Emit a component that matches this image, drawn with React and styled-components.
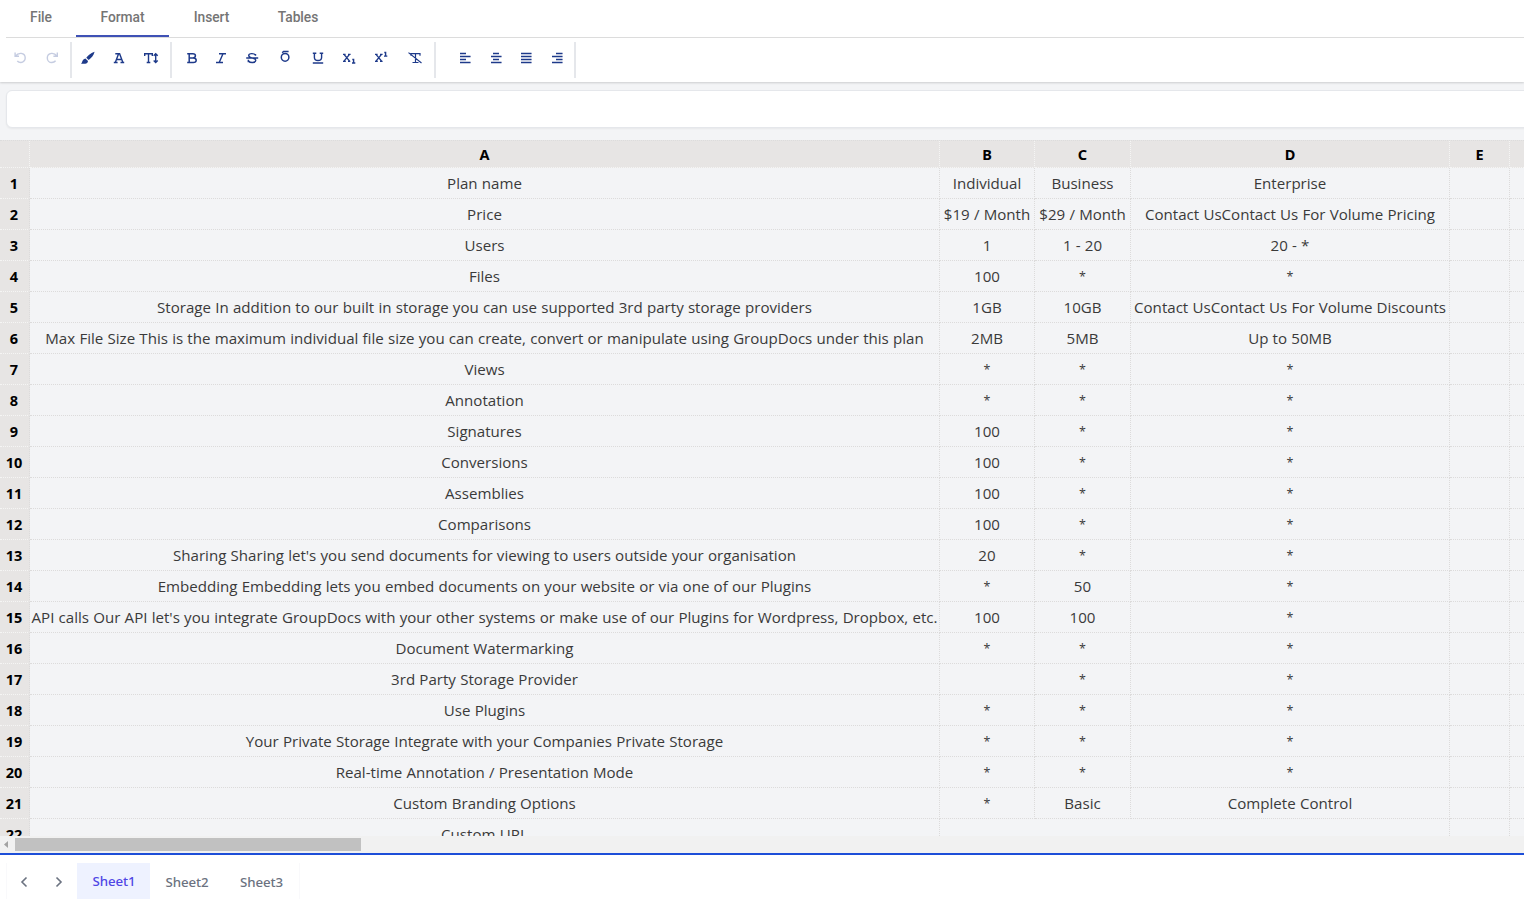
import React from "react";
import styled, { createGlobalStyle } from "styled-components";

const Global = createGlobalStyle`
  * { box-sizing: border-box; }
  html, body { margin: 0; padding: 0; overflow: hidden; background: #f3f4f6; }
`;

const Page = styled.div`
  display: flex;
  flex-direction: column;
  width: 100vw;
  height: 100vh;
  overflow: hidden;
  background: #f3f4f6;
  font-family: "Open Sans", "Noto Sans", sans-serif;
`;

const Header = styled.header`
  display: flex;
  flex-direction: column;
  flex: 0 0 82px;
  background: #fff;
  box-shadow: 0 1px 2px rgba(0, 0, 0, 0.16);
`;

const Menu = styled.nav`
  display: flex;
  height: 38px;
  margin-left: 6px;
  border-bottom: 1px solid #dcdcdc;
`;

const MenuTab = styled.div`
  width: ${(p) => p.$w}px;
  height: 37px;
  text-align: center;
  font: 500 13.8px/35px Roboto, sans-serif;
  letter-spacing: -0.05px;
  color: #757575;
  border-bottom: 2px solid ${(p) => (p.$active ? "#3f51b5" : "transparent")};
`;

const Toolbar = styled.div`
  display: flex;
  padding-top: 4px;
  height: 44px;
`;

const Group = styled.div`
  display: flex;
  width: ${(p) => p.$w}px;
  height: 36px;
  padding-left: ${(p) => p.$pad}px;
  border-right: 2px solid #e5e7eb;
`;

const ToolButton = styled.span`
  flex: 0 0 ${(p) => p.$w}px;
  height: 32px;
  color: #1e3a8a;
  opacity: ${(p) => (p.$disabled ? 0.25 : 1)};
  svg { display: block; margin: 8px auto 0; overflow: visible; }
`;

const FormulaBar = styled.div`
  flex: 0 0 38px;
  margin: 8px -6px 12px 6px;
  background: #fff;
  border: 1px solid #e5e7eb;
  border-radius: 6px;
  box-shadow: 0 1px 2px rgba(0, 0, 0, 0.05);
`;

const Grid = styled.div`
  flex: 0 0 696px;
  overflow: hidden;
`;

const Row = styled.div`
  display: grid;
  grid-template-columns: ${(p) =>
    p.$merged ? "30px 910px 510px 60px 90px" : "30px 910px 95px 96px 319px 60px 90px"};
  height: ${(p) => (p.$head ? 28 : 31)}px;
  ${(p) => p.$head && "border-top: 1px dotted #dcdcdc; background: #e7e5e4;"}
`;

const Cell = styled.div`
  overflow: hidden;
  text-align: center;
  white-space: nowrap;
  font-size: ${(p) => (p.$star ? 12.5 : 15.1)}px;
  font-weight: 400;
  line-height: ${(p) => (p.$star ? 32 : 31)}px;
  word-spacing: 0.3px;
  color: #3a3a3a;
  border-right: 1px dotted #dcdbdb;
  border-bottom: 1px dotted #dcdbdb;
`;

const HeadCell = styled(Cell)`
  font-family: "Noto Sans", sans-serif;
  font-weight: 700;
  font-size: 14.5px;
  line-height: ${(p) => (p.$row ? 31 : 27)}px;
  padding-right: ${(p) => (p.$row ? 1 : 0)}px;
  color: #000;
  background: #e7e5e4;
  border-right-color: ${(p) => (p.$row ? "#dcdbdb" : "#f5f5f4")};
  border-bottom-color: #f5f5f4;
`;

const ScrollBar = styled.div`
  display: flex;
  align-items: center;
  flex: 0 0 17px;
  padding-left: 3px;
  background: #f1f1f1;
  svg { flex: 0 0 12px; }
`;

const Thumb = styled.div`
  width: 346px;
  height: 13px;
  background: #c1c1c1;
`;

const Footer = styled.footer`
  display: flex;
  flex: 1;
  padding: 8px 0 0 6px;
  background: #fff;
  border-top: 2px solid #1d4ed8;
`;

const Pager = styled.div`
  display: flex;
  width: 71px;
  height: 36px;
  padding: 13px 0 0 13px;
  gap: 27px;
  border-left: 1px solid #f9f9fb;
`;

const SheetTab = styled.div`
  width: ${(p) => p.$w}px;
  height: 36px;
  text-align: center;
  font: 500 13.3px/38px "Noto Sans", sans-serif;
  letter-spacing: -0.1px;
  color: ${(p) => (p.$active ? "#4f46e5" : "#6b7280")};
  background: ${(p) => (p.$active ? "#eef2ff" : "transparent")};
  ${(p) => p.$active && "line-height: 36px; padding-left: 1px;"}
  ${(p) => p.$last && "border-right: 1px solid #f9f9fb;"}
`;

function Icon({ d, fill, sw = 1.4, children }) {
  return (
    <svg width="16" height="16" viewBox="0 0 16 16" fill="none" stroke="currentColor" strokeWidth={sw}>
      {d && <path d={d} />}
      {fill && <path d={fill} fill="currentColor" stroke="none" />}
      {children}
    </svg>
  );
}

const align = (lines) => (
  <Icon>
    {lines.map(([a, b], i) => (
      <g key={i}>
        <path d={`M${a} ${3.5 + i * 3}H${b}`} strokeWidth="3" opacity="0.25" />
        <path d={`M${a} ${3.5 + i * 3}H${b}`} strokeWidth="1" />
      </g>
    ))}
  </Icon>
);

const groups = [
  {
    w: 72, pad: 4,
    items: [
      [31, <Icon d="M3.1 2.6v3.7h3.9M3.4 6.2C5 4 7.2 3.2 9.2 3.4c2.3.3 4 2.2 4 4.5s-1.8 4.6-4.3 4.6c-1.6 0-2.7-.5-3.6-1.5" />, true],
      [33, <Icon d="M13.3 2.6v3.7H9.4M13 6.2C11.4 4 9.5 3.2 7.5 3.4 5.1 3.7 3.3 5.5 3.3 7.9c0 2.6 2 4.6 4.5 4.6 1.7 0 2.9-.6 3.8-1.7" />, true],
    ],
  },
  {
    w: 100, pad: 0,
    items: [
      [31, <Icon fill="M14.6 1.8c-3.3.9-6.7 3.5-8.3 6l2.4 2.2c2.7-1.9 5.1-4.9 5.9-8.2ZM5.4 8.4 8 10.9C7.9 13.1 6 14.2 1 13.7 2.4 12.8 2 9.1 5.4 8.4Z" />],
      [32, <Icon d="M4.3 3.7h4.3l3.3 8.7M7.5 4 4.3 12.4M5.3 9.5h5.4M2.8 12.5h3.8M9.5 12.5h3.7" />],
      [32, <Icon d="M1.7 6V3.7h7.6V6M5.5 3.7v8.8M3.7 12.5h3.6M12.7 4.5v7M10.7 5.7l2-2 2 2M10.7 10.6l2 2 2-2" />],
    ],
  },
  {
    w: 264, pad: 5,
    items: [
      [30, <Icon d="M3.2 3.7h5.6c3.5 0 3.5 4.2 0 4.2H5.2h4c4 0 4 4.6 0 4.6H3.2M5.2 3.7v8.8" sw={1.5} />],
      [28, <Icon d="M6 3.7h7M3 12.5h7M10 3.7l-3.8 8.8" />],
      [34, <Icon d="M11.5 5.8V4M11.5 5.3C10.5 3 4.7 3 4.7 5.6c0 1.6 2 2.1 3.7 2.5 2 .4 3.4 1 3.4 2.2 0 2.8-5.8 2.9-7.2.7M4.3 9.8v2.4M2.2 8h12" />],
      [31, <Icon d="M5.2 2.8 6.6 1.4h5" sw={1.5}><ellipse cx="8.1" cy="7.3" rx="3.8" ry="3.9" /></Icon>],
      [36, <Icon d="M2.8 3.3h3.5M9.7 3.3h3.5M4.4 3.3v4.2c0 4 7.2 4 7.2 0V3.3M2.8 13h10.4" />],
      [26, <Icon d="M2 4.4h2.6M7 4.4h2.6M3 4.4l5.8 7M8.5 4.4l-5.7 7M2 11.4h2.8M7 11.4h2.3M11.3 9.5h1.3V13M11 13h3.3" />],
      [38, <Icon d="M2 4.4h2.6M7 4.4h2.6M3 4.4l5.8 7M8.5 4.4l-5.7 7M2 11.4h2.8M7 11.4h2.6M11.3 2.5h1.3v3.6M11 6.1h3.3" />],
      [30, <Icon d="M4 5.7V3.7h9v2M8.5 3.7v8.8M5.5 12.5h6M1.5 2.6 14.5 13" sw={1.2} />],
    ],
  },
  {
    w: 140, pad: 13,
    items: [
      [32, align([[3, 9], [3, 13.5], [3, 9], [3, 13.5]])],
      [30, align([[5, 11], [3, 13.5], [5, 11], [3, 13.5]])],
      [30, align([[3, 13.5], [3, 13.5], [3, 13.5], [3, 13.5]])],
      [32, align([[7, 13.5], [3, 13.5], [7, 13.5], [3, 13.5]])],
    ],
  },
];

const rows = [
  ["Plan name", "Individual", "Business", "Enterprise"],
  ["Price", "$19 / Month", "$29 / Month", "Contact UsContact Us For Volume Pricing"],
  ["Users", "1", "1 - 20", "20 - *"],
  ["Files", "100", "*", "*"],
  ["Storage In addition to our built in storage you can use supported 3rd party storage providers", "1GB", "10GB", "Contact UsContact Us For Volume Discounts"],
  ["Max File Size This is the maximum individual file size you can create, convert or manipulate using GroupDocs under this plan", "2MB", "5MB", "Up to 50MB"],
  ["Views", "*", "*", "*"],
  ["Annotation", "*", "*", "*"],
  ["Signatures", "100", "*", "*"],
  ["Conversions", "100", "*", "*"],
  ["Assemblies", "100", "*", "*"],
  ["Comparisons", "100", "*", "*"],
  ["Sharing Sharing let's you send documents for viewing to users outside your organisation", "20", "*", "*"],
  ["Embedding Embedding lets you embed documents on your website or via one of our Plugins", "*", "50", "*"],
  ["API calls Our API let's you integrate GroupDocs with your other systems or make use of our Plugins for Wordpress, Dropbox, etc.", "100", "100", "*"],
  ["Document Watermarking", "*", "*", "*"],
  ["3rd Party Storage Provider", "", "*", "*"],
  ["Use Plugins", "*", "*", "*"],
  ["Your Private Storage Integrate with your Companies Private Storage", "*", "*", "*"],
  ["Real-time Annotation / Presentation Mode", "*", "*", "*"],
  ["Custom Branding Options", "*", "Basic", "Complete Control"],
  ["Custom URL", ""],
];

export default function App() {
  return (
    <Page>
      <Global />
      <Header>
        <Menu>
          <MenuTab $w={70}>File</MenuTab>
          <MenuTab $w={93} $active>Format</MenuTab>
          <MenuTab $w={85}>Insert</MenuTab>
          <MenuTab $w={88}>Tables</MenuTab>
        </Menu>
        <Toolbar>
          {groups.map((g, i) => (
            <Group key={i} $w={g.w} $pad={g.pad}>
              {g.items.map(([w, icon, disabled], j) => (
                <ToolButton key={j} $w={w} $disabled={disabled}>{icon}</ToolButton>
              ))}
            </Group>
          ))}
        </Toolbar>
      </Header>
      <FormulaBar />
      <Grid>
        <Row $head>
          {["", "A", "B", "C", "D", "E", ""].map((c, i) => (
            <HeadCell key={i}>{c}</HeadCell>
          ))}
        </Row>
        {rows.map((r, i) => (
          <Row key={i} $merged={r.length === 2}>
            <HeadCell $row>{i + 1}</HeadCell>
            {r.map((c, j) => (
              <Cell key={j} $star={c === "*"}>{c}</Cell>
            ))}
            <Cell />
            <Cell />
          </Row>
        ))}
      </Grid>
      <ScrollBar>
        <svg width="12" height="9" viewBox="0 0 12 9"><path d="M1 4.5 5 1v7z" fill="#a3a3a3" /></svg>
        <Thumb />
      </ScrollBar>
      <Footer>
        <Pager>
          <svg width="8" height="12" viewBox="0 0 8 12" fill="none" stroke="#6b7280" strokeWidth="1.6"><path d="M6.5 1.5 2 6 6.5 10.5" /></svg>
          <svg width="8" height="12" viewBox="0 0 8 12" fill="none" stroke="#6b7280" strokeWidth="1.6"><path d="M1.5 1.5 6 6 1.5 10.5" /></svg>
        </Pager>
        <SheetTab $w={73} $active>Sheet1</SheetTab>
        <SheetTab $w={74}>Sheet2</SheetTab>
        <SheetTab $w={76} $last>Sheet3</SheetTab>
      </Footer>
    </Page>
  );
}
